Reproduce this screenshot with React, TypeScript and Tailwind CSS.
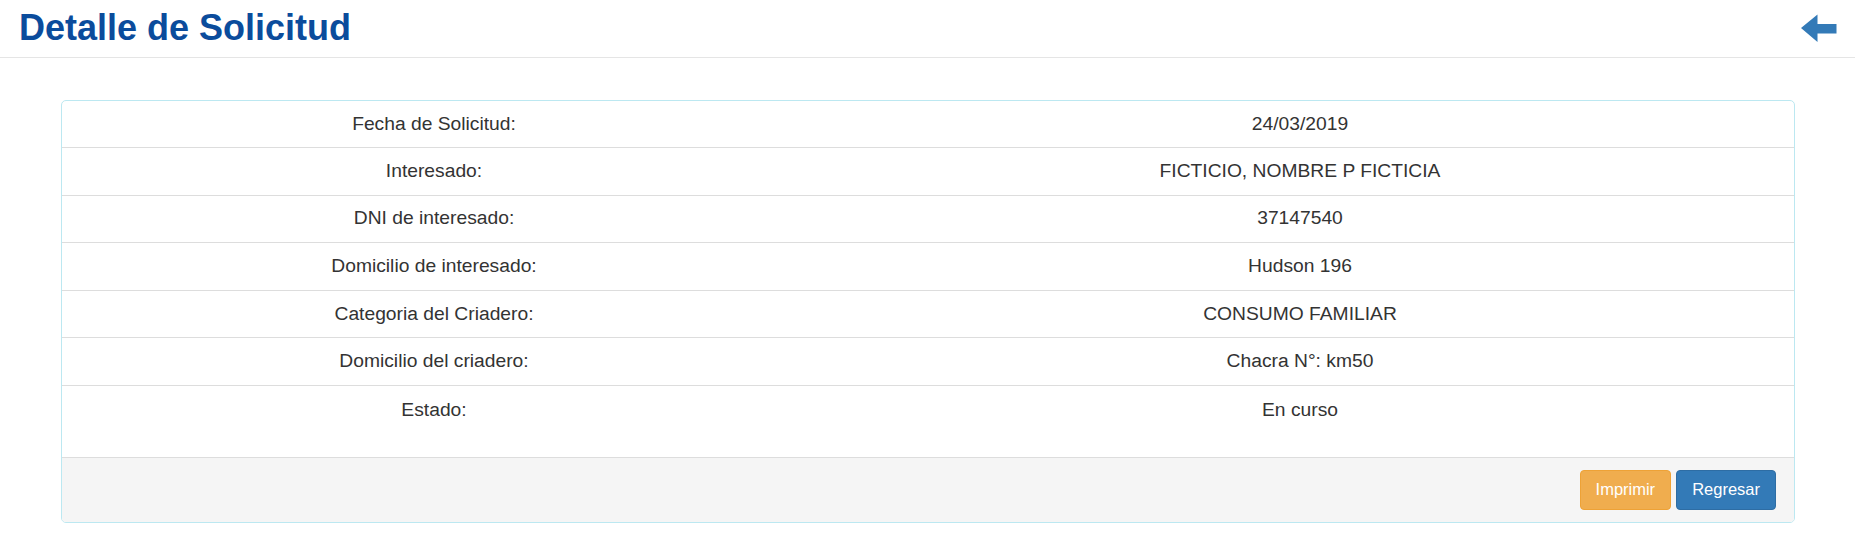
import React from 'react';

const rows: [string, string][] = [
  ['Fecha de Solicitud:', '24/03/2019'],
  ['Interesado:', 'FICTICIO, NOMBRE P FICTICIA'],
  ['DNI de interesado:', '37147540'],
  ['Domicilio de interesado:', 'Hudson 196'],
  ['Categoria del Criadero:', 'CONSUMO FAMILIAR'],
  ['Domicilio del criadero:', 'Chacra N°: km50'],
  ['Estado:', 'En curso'],
];

const BackArrow = () => (
  <svg width="36" height="28" viewBox="0 0 36 28" className="block">
    <polygon points="0,14 16.5,0.5 16.5,10 35.5,10 35.5,19.5 16.5,19.5 16.5,28" fill="#337ab7" />
  </svg>
);

export default function App() {
  return (
    <div className="min-h-[543px] bg-white text-[#333]" style={{ fontFamily: '"Liberation Sans", Arial, sans-serif' }}>
      {/* Header */}
      <div className="h-[58px] border-b border-[#e5e5e5] flex items-center justify-between pl-[19px] pr-[18px]">
        <h1 className="text-[36px] font-bold text-[#0b4c9c] leading-none -mt-[2px]">Detalle de Solicitud</h1>
        <button className="-mt-[2px]" aria-label="Volver">
          <BackArrow />
        </button>
      </div>

      {/* Panel */}
      <div className="pl-[61px] pr-[60px] pt-[42px]">
        <div className="border border-[#bce8f1] rounded-[5px] overflow-hidden">
          <div className="pb-[24px]">
            {rows.map(([label, value], i) => (
              <div
                key={label}
                className={`grid grid-cols-[744px_1fr] text-[19.25px] ${i === 0 ? 'h-[46px]' : 'h-[47.6px] border-t border-[#ddd]'} ${label === 'Estado:' ? 'items-start pt-[10px]' : 'items-center'}`}
              >
                <div className="text-center">{label}</div>
                <div className="text-center">{value}</div>
              </div>
            ))}
          </div>
          <div className="bg-[#f5f5f5] border-t border-[#ddd] h-[65px] flex items-center justify-end gap-[5px] pr-[18px]">
            <button className="h-[40px] px-[15px] rounded-[4px] bg-[#f0ad4e] border border-[#eea236] text-white text-[16.5px]">
              Imprimir
            </button>
            <button className="h-[40px] px-[15px] rounded-[4px] bg-[#337ab7] border border-[#2e6da4] text-white text-[16.5px]">
              Regresar
            </button>
          </div>
        </div>
      </div>
    </div>
  );
}
